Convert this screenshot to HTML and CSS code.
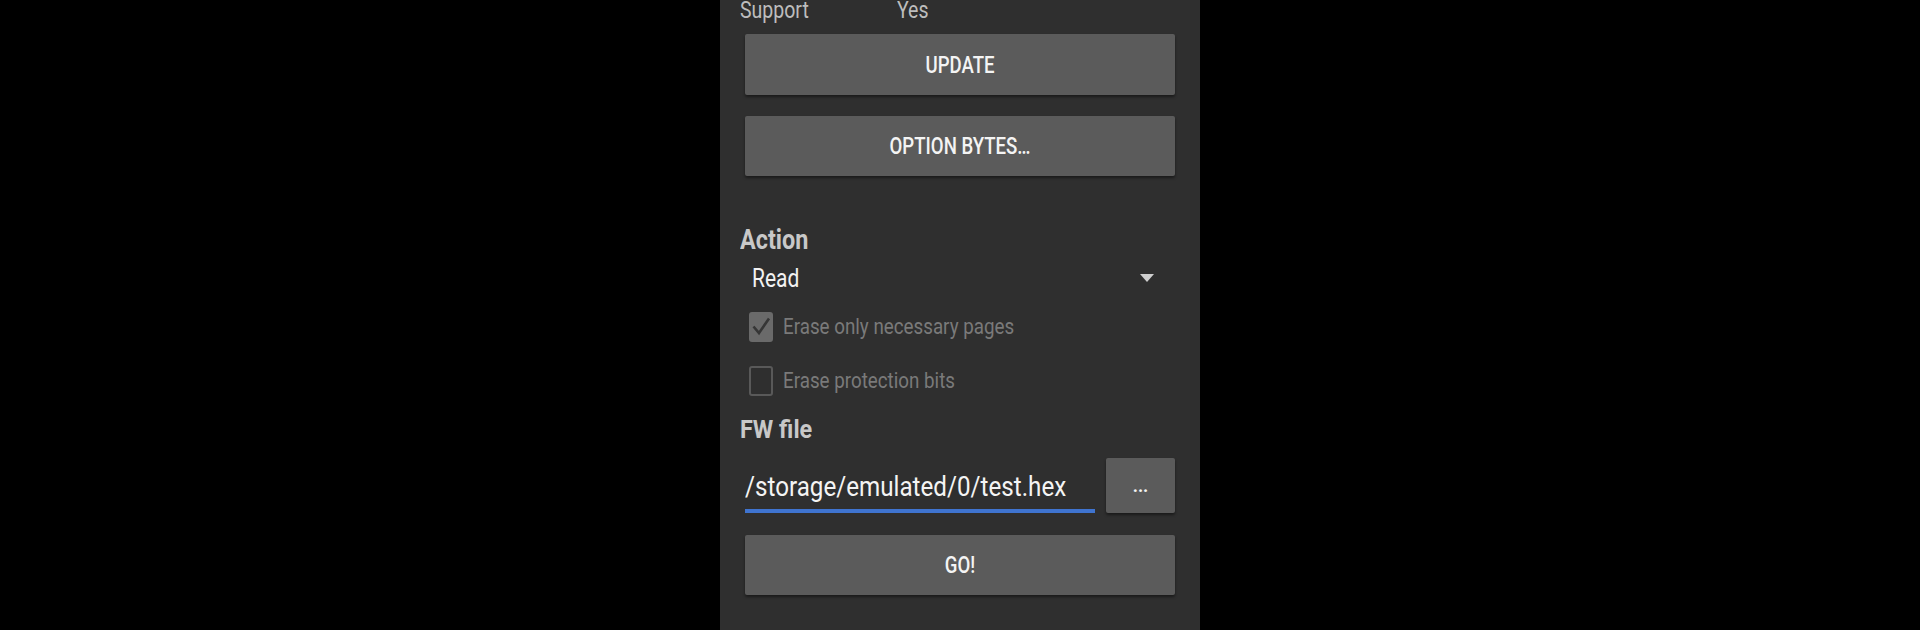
FILE: index.html
```html
<!DOCTYPE html>
<html lang="en">
<head>
    <meta charset="UTF-8">
    <meta name="viewport" content="width=device-width, initial-scale=1.0">
    <title>Flasher</title>
    <link rel="stylesheet" href="styles.css">
</head>
<body>
    <div class="screen">
        <div class="info-row">
            <span class="tall">Support</span>
            <span class="tall">Yes</span>
        </div>

        <button class="btn btn-update" type="button"><span class="tall tall-btn">UPDATE</span></button>
        <button class="btn btn-options" type="button"><span class="tall tall-btn">OPTION BYTES…</span></button>

        <h2 class="section-title section-action"><span class="tall">Action</span></h2>
        <div class="select">
            <span class="tall">Read</span>
            <span class="select-arrow"></span>
        </div>

        <label class="check check-first">
            <span class="box checked">
                <svg width="24" height="30" viewBox="0 0 24 30">
                    <polyline points="4.5,14.5 10,21 20,6.5" fill="none" stroke="#363636" stroke-width="2.6"/>
                </svg>
            </span>
            <span class="tall">Erase only necessary pages</span>
        </label>
        <label class="check check-second">
            <span class="box"></span>
            <span class="tall">Erase protection bits</span>
        </label>

        <h2 class="section-title section-file"><span class="tall tall-small">FW file</span></h2>
        <div class="file-row">
            <div class="file-input"><span class="tall tall-input">/storage/emulated/0/test.hex</span></div>
            <button class="btn btn-browse" type="button">...</button>
        </div>

        <button class="btn btn-go" type="button"><span class="tall tall-btn">GO!</span></button>
    </div>
</body>
</html>
```

FILE: styles.css
```css
* {
    margin: 0;
    padding: 0;
    box-sizing: border-box;
    font-family: Roboto, 'Liberation Sans', sans-serif;
}

body {
    display: flex;
    justify-content: center;
    height: 100vh;
    overflow: hidden;
    background: #000;
}

.screen {
    width: 480px;
    height: 630px;
    background: #2f2f2f;
    padding: 0 20px;
    display: flex;
    flex-direction: column;
}

/* the capture is stretched vertically, text looks condensed */
.tall {
    display: inline-block;
    transform: scaleY(1.22);
}

.tall-small {
    transform: scaleY(1.1);
}

.tall-btn {
    transform: scaleY(1.28);
}

.tall-input {
    transform: scaleY(1.17);
}

.info-row {
    display: grid;
    grid-template-columns: 157px 1fr;
    height: 20px;
    margin-top: 1px;
    line-height: 20px;
    font-size: 19.5px;
    color: #bdbdbd;
}

.btn {
    display: flex;
    align-items: center;
    justify-content: center;
    margin: 0 5px;
    border: none;
    border-radius: 2px;
    background: #5b5b5b;
    color: #f4f4f4;
    font-size: 18.6px;
    font-weight: 500;
    box-shadow: 0 2px 3px rgba(0, 0, 0, 0.45);
    cursor: pointer;
}

.btn-update {
    margin-top: 13px;
    height: 61px;
}

.btn-options {
    margin-top: 21px;
    height: 60px;
}

.section-title {
    height: 30px;
    line-height: 30px;
    font-size: 23.4px;
    font-weight: 700;
    color: #c8c8c8;
}

.section-action {
    margin-top: 48px;
}

.select {
    display: flex;
    justify-content: space-between;
    align-items: center;
    margin-top: 6px;
    height: 36px;
    padding: 0 26px 0 12px;
    font-size: 21px;
    color: #f2f2f2;
}

.select-arrow {
    width: 0;
    height: 0;
    border-left: 7px solid transparent;
    border-right: 7px solid transparent;
    border-top: 8px solid #cfcfcf;
}

.check {
    display: flex;
    align-items: center;
    gap: 10px;
    height: 36px;
    padding-left: 9px;
    font-size: 18.8px;
    color: #7a7a7a;
}

.check-first {
    margin-top: 13px;
}

.check-second {
    margin-top: 18px;
}

.box {
    width: 24px;
    height: 30px;
    border: 2px solid #595959;
    border-radius: 3px;
}

.box.checked {
    border: none;
    background: #6a6a6a;
}

.box svg {
    display: block;
}

.section-file {
    margin-top: 15px;
}

.file-row {
    display: flex;
    gap: 11px;
    margin: 14px 5px 0;
    height: 55px;
}

.file-input {
    flex: 1;
    height: 55px;
    padding-top: 14px;
    line-height: 30px;
    border-bottom: 4px solid #3f74d0;
    color: #f4f4f4;
    font-size: 24.2px;
    white-space: nowrap;
}

.btn-browse {
    width: 69px;
    margin: 0;
    font-size: 18px;
    font-weight: 700;
}

.btn-go {
    margin-top: 22px;
    height: 60px;
}
```
